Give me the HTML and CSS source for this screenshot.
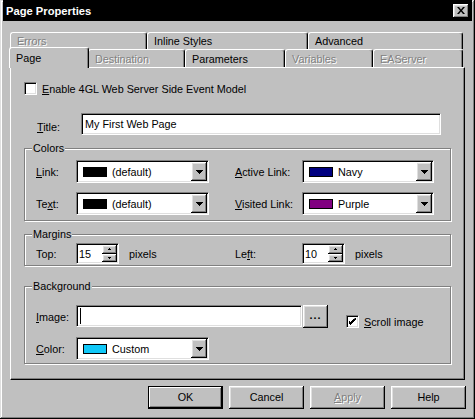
FILE: index.html
```html
<!DOCTYPE html>
<html lang="en">

<head>
    <meta charset="UTF-8">
    <title>Page Properties</title>
    <link rel="stylesheet" href="styles.css">
</head>

<body>
    <div class="window">
        <div class="titlebar">
            <span class="title">Page Properties</span>
            <span class="close raised">
                <svg width="8" height="7" viewBox="0 0 8 7"><path d="M0 0h2l2 2.5 2-2.5h2l-3 3.5 3 3.5h-2l-2-2.5-2 2.5h-2l3-3.5z"/></svg>
            </span>
        </div>

        <div class="tabs">
            <div class="tab-row back">
                <div class="tab t-errors disabled">Errors</div>
                <div class="tab t-inline">Inline Styles</div>
                <div class="tab t-advanced">Advanced</div>
            </div>
            <div class="tab-row front">
                <div class="tab t-page selected">Page</div>
                <div class="tab t-dest disabled">Destination</div>
                <div class="tab t-params">Parameters</div>
                <div class="tab t-vars disabled">Variables</div>
                <div class="tab t-eas disabled">EAServer</div>
            </div>
        </div>

        <div class="panel">
            <div class="check-row">
                <span class="checkbox"></span>
                <span class="check-text"><u>E</u>nable 4GL Web Server Side Event Model</span>
            </div>

            <div class="title-row">
                <span class="title-lbl"><u>T</u>itle:</span>
                <span class="field title-field">My First Web Page</span>
            </div>

            <div class="group colors">
                <span class="legend">Colors</span>
                <div class="field-row">
                    <div class="col">
                        <span class="lbl-a"><u>L</u>ink:</span>
                        <span class="field combo">
                            <span class="swatch black"></span>(default)
                            <span class="drop raised"><svg width="7" height="4" viewBox="0 0 7 4"><path d="M0 0h7v1h-1v1h-1v1h-1v1h-1v-1h-1v-1h-1v-1h-1z"/></svg></span>
                        </span>
                    </div>
                    <span class="lbl-b"><u>A</u>ctive Link:</span>
                    <span class="field combo wide">
                        <span class="swatch navy"></span>Navy
                        <span class="drop raised"><svg width="7" height="4" viewBox="0 0 7 4"><path d="M0 0h7v1h-1v1h-1v1h-1v1h-1v-1h-1v-1h-1v-1h-1z"/></svg></span>
                    </span>
                </div>
                <div class="field-row second">
                    <div class="col">
                        <span class="lbl-a">Te<u>x</u>t:</span>
                        <span class="field combo">
                            <span class="swatch black"></span>(default)
                            <span class="drop raised"><svg width="7" height="4" viewBox="0 0 7 4"><path d="M0 0h7v1h-1v1h-1v1h-1v1h-1v-1h-1v-1h-1v-1h-1z"/></svg></span>
                        </span>
                    </div>
                    <span class="lbl-b"><u>V</u>isited Link:</span>
                    <span class="field combo wide">
                        <span class="swatch purple"></span>Purple
                        <span class="drop raised"><svg width="7" height="4" viewBox="0 0 7 4"><path d="M0 0h7v1h-1v1h-1v1h-1v1h-1v-1h-1v-1h-1v-1h-1z"/></svg></span>
                    </span>
                </div>
            </div>

            <div class="group margins">
                <span class="legend">Margins</span>
                <div class="field-row">
                    <div class="col">
                        <span class="lbl-a">Top:</span>
                        <span class="field spin">15
                            <span class="spin-btns">
                                <span class="raised"><svg width="3" height="2" viewBox="0 0 3 2"><path d="M1 0h1v1h1v1h-3v-1h1z"/></svg></span>
                                <span class="raised"><svg width="3" height="2" viewBox="0 0 3 2"><path d="M0 0h3v1h-1v1h-1v-1h-1z"/></svg></span>
                            </span>
                        </span>
                        <span class="unit">pixels</span>
                    </div>
                    <span class="lbl-b">Le<u>f</u>t:</span>
                    <span class="field spin">10
                        <span class="spin-btns">
                            <span class="raised"><svg width="3" height="2" viewBox="0 0 3 2"><path d="M1 0h1v1h1v1h-3v-1h1z"/></svg></span>
                            <span class="raised"><svg width="3" height="2" viewBox="0 0 3 2"><path d="M0 0h3v1h-1v1h-1v-1h-1z"/></svg></span>
                        </span>
                    </span>
                    <span class="unit">pixels</span>
                </div>
            </div>

            <div class="group background">
                <span class="legend">Background</span>
                <div class="image-row">
                    <span class="lbl-a img-lbl"><u>I</u>mage:</span>
                    <span class="field image-field"><span class="caret"></span></span>
                    <span class="btn browse">...</span>
                    <span class="scroll-check">
                        <span class="checkbox checked">
                            <svg width="7" height="7" viewBox="0 0 7 7"><path d="M6 0h1v2h-1v1h-1v1h-1v1h-1v1h-1v1h-1v-1h-1v-1h-1v-3h1v1h1v1h1v-1h1v-1h1v-1h1z"/></svg>
                        </span>
                        <span class="check-text"><u>S</u>croll image</span>
                    </span>
                </div>
                <div class="field-row color-row">
                    <span class="lbl-a"><u>C</u>olor:</span>
                    <span class="field combo">
                        <span class="swatch cyan"></span>Custom
                        <span class="drop raised"><svg width="7" height="4" viewBox="0 0 7 4"><path d="M0 0h7v1h-1v1h-1v1h-1v1h-1v-1h-1v-1h-1v-1h-1z"/></svg></span>
                    </span>
                </div>
            </div>
        </div>

        <div class="buttons">
            <span class="btn default">OK</span>
            <span class="btn">Cancel</span>
            <span class="btn disabled"><u>A</u>pply</span>
            <span class="btn">Help</span>
        </div>
    </div>
</body>

</html>
```

FILE: styles.css
```css
body {
    margin: 0;
    background-color: #c0c0c0;
    font-family: "Liberation Sans", Arial, sans-serif;
    font-size: 10.8px;
    color: #000;
}

u {
    text-decoration-thickness: 1px;
    text-underline-offset: 1px;
}

.window {
    width: 475px;
    height: 419px;
    box-sizing: border-box;
    padding: 0 3px 3px;
    box-shadow: inset -1px -1px #000, inset 1px 1px #dfdfdf, inset -2px -2px #808080, inset 2px 2px #fff;
}

.raised {
    background-color: #c0c0c0;
    box-shadow: inset -1px -1px #000, inset 1px 1px #fff, inset -2px -2px #808080, inset 2px 2px #dfdfdf;
}

.disabled {
    color: #808080;
    text-shadow: 1px 1px 0 #fff;
}

/* title bar */

.titlebar {
    height: 21px;
    background-color: #000;
    color: #fff;
    display: flex;
    align-items: center;
    justify-content: space-between;
    padding: 0 3px;
}

.title {
    font-weight: bold;
    font-size: 11.2px;
}

.close {
    width: 16px;
    height: 14px;
    display: flex;
    align-items: center;
    justify-content: center;
}

/* tabs */

.tabs {
    margin: 11px 0 0 7px;
}

.tab-row {
    display: flex;
}

.tab-row.back {
    height: 17px;
}

.tab-row.front {
    height: 18px;
    align-items: flex-end;
}

.tab {
    box-sizing: border-box;
    height: 100%;
    display: flex;
    align-items: center;
    padding-left: 6px;
    border-top: 1px solid #fff;
    border-left: 1px solid #fff;
    border-right: 1px solid #000;
    border-radius: 3px 3px 0 0;
    box-shadow: inset -1px 0 #808080;
    background-color: #c0c0c0;
}

.tab.selected {
    height: 21px;
    margin: 0 -1px -1px;
    position: relative;
    z-index: 1;
}

.t-errors { width: 137px; }
.t-inline { width: 161px; }
.t-advanced { width: 155px; }
.t-page { width: 80px; }
.t-dest { width: 97px; }
.t-params { width: 100px; }
.t-vars { width: 88px; }
.t-eas { width: 90px; }

/* panel */

.panel {
    margin-left: 7px;
    width: 455px;
    height: 313px;
    box-sizing: border-box;
    padding: 14px 13px 0;
    border: 1px solid;
    border-color: #fff #000 #000 #fff;
    box-shadow: inset -1px -1px #808080;
}

.checkbox {
    width: 13px;
    height: 13px;
    box-sizing: border-box;
    flex-shrink: 0;
    background-color: #fff;
    border: 1px solid;
    border-color: #808080 #fff #fff #808080;
    box-shadow: inset 1px 1px #000, inset -1px -1px #dfdfdf;
    display: flex;
    align-items: center;
    justify-content: center;
}

.check-row {
    display: flex;
    align-items: center;
    height: 13px;
}

.check-text {
    margin-left: 5px;
}

.field {
    box-sizing: border-box;
    background-color: #fff;
    border: 1px solid;
    border-color: #808080 #fff #fff #808080;
    box-shadow: inset 1px 1px #000, inset -1px -1px #dfdfdf;
    display: flex;
    align-items: center;
}

.title-row {
    display: flex;
    align-items: flex-end;
    margin-top: 18px;
}

.title-lbl {
    width: 57px;
    box-sizing: border-box;
    padding-left: 13px;
    line-height: 13px;
    margin-bottom: 1px;
}

.title-field {
    width: 360px;
    height: 22px;
    padding-left: 3px;
}

/* group boxes */

.group {
    position: relative;
    box-sizing: border-box;
    border: 1px solid #808080;
    box-shadow: inset 1px 1px #fff, 1px 1px #fff;
    padding-left: 11px;
}

.legend {
    position: absolute;
    top: -7px;
    left: 7px;
    padding: 0 1px;
    line-height: 13px;
    background-color: #c0c0c0;
}

.colors {
    margin-top: 13px;
    height: 73px;
    padding-top: 11px;
}

.margins {
    margin-top: 13px;
    height: 32px;
    padding-top: 8px;
}

.background {
    margin-top: 20px;
    height: 78px;
    padding-top: 18px;
}

.field-row {
    display: flex;
    align-items: center;
}

.field-row.second {
    margin-top: 9px;
}

.col {
    display: flex;
    align-items: center;
    width: 199px;
}

.lbl-a {
    width: 40px;
    flex-shrink: 0;
}

.lbl-b {
    width: 67px;
    flex-shrink: 0;
}

.combo {
    width: 133px;
    height: 23px;
    padding: 0 1px 0 6px;
}

.combo.wide {
    width: 132px;
}

.swatch {
    width: 24px;
    height: 10px;
    box-sizing: border-box;
    border: 1px solid #000;
    margin-right: 5px;
}

.swatch.black { background-color: #000; }
.swatch.navy { background-color: #000080; }
.swatch.purple { background-color: #800080; }
.swatch.cyan { background-color: #10c8f8; }

.drop {
    margin-left: auto;
    width: 16px;
    height: 19px;
    display: flex;
    align-items: center;
    justify-content: center;
}

.spin {
    width: 43px;
    height: 21px;
    padding: 0 1px 0 2px;
}

.spin-btns {
    margin-left: auto;
    width: 15px;
    height: 17px;
    display: flex;
    flex-direction: column;
}

.spin-btns span {
    flex: 1;
    display: flex;
    align-items: center;
    justify-content: center;
}

.unit {
    margin-left: 10px;
}

.image-row {
    display: flex;
    align-items: flex-start;
}

.img-lbl {
    margin-top: 6px;
}

.image-field {
    width: 226px;
    height: 22px;
    padding-left: 3px;
}

.caret {
    width: 1px;
    height: 16px;
    background-color: #000;
}

.scroll-check {
    display: flex;
    align-items: center;
    margin: 10px 0 0 18px;
}

.color-row {
    margin-top: 9px;
}

/* buttons */

.btn {
    width: 75px;
    height: 23px;
    box-sizing: border-box;
    display: flex;
    align-items: center;
    justify-content: center;
    padding-bottom: 2px;
    background-color: #c0c0c0;
    box-shadow: inset -1px -1px #000, inset 1px 1px #fff, inset -2px -2px #808080, inset 2px 2px #dfdfdf;
}

.btn.default {
    box-shadow: inset 0 0 0 1px #000, inset -2px -2px #000, inset 2px 2px #fff, inset -3px -3px #808080;
}

.browse {
    width: 25px;
    margin-left: 1px;
    font-weight: bold;
    letter-spacing: 1px;
    padding-bottom: 4px;
}

.buttons {
    display: flex;
    justify-content: flex-end;
    gap: 6px;
    width: 456px;
    margin: 6px 0 0 7px;
}
```
